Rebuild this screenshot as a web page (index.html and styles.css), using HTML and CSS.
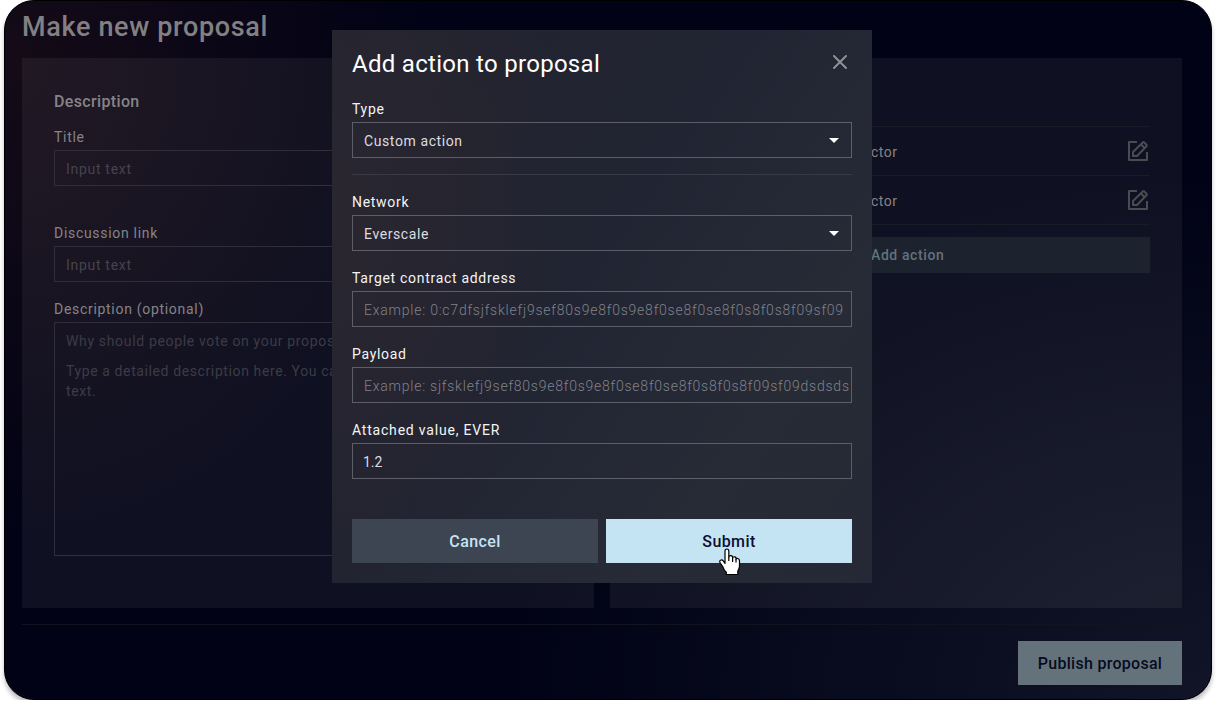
FILE: index.html
```html
<!DOCTYPE html>
<html lang="en">
<head>
<meta charset="utf-8">
<title>Make new proposal</title>
<link rel="stylesheet" href="styles.css">
</head>
<body>
<div class="frame">
  <main class="page">
    <h1 class="page-title">Make new proposal</h1>
    <div class="panels">
      <section class="panel">
        <h2 class="panel-title">Description</h2>
        <div class="label">Title</div>
        <div class="input dim gap-lg">Input text</div>
        <div class="label">Discussion link</div>
        <div class="input dim gap">Input text</div>
        <div class="label">Description (optional)</div>
        <div class="textarea"><p class="why">Why should people vote on your propos</p><p>Type a detailed description here. You ca<br>text.</p></div>
      </section>
      <section class="panel actions">
        <div class="row"><span>ctor</span><svg class="edit" viewBox="0 0 20 20"><path d="M9 1H1v18h18v-8M5 15v-4L15 1.3h1L18.7 4v1L9 15zM13 3.500l3.500 3.500"/></svg></div>
        <div class="row"><span>ctor</span><svg class="edit" viewBox="0 0 20 20"><path d="M9 1H1v18h18v-8M5 15v-4L15 1.3h1L18.7 4v1L9 15zM13 3.500l3.500 3.500"/></svg></div>
        <div class="add"><span>Add action</span></div>
      </section>
    </div>
    <footer class="footer"><div class="publish">Publish proposal</div></footer>
  </main>
  <div class="modal">
    <header class="modal-head">
      <h2 class="modal-title">Add action to proposal</h2>
      <svg class="close" viewBox="0 0 14 14"><path d="M1 1l12 12M13 1L1 13"/></svg>
    </header>
    <div class="label">Type</div>
    <div class="input select"><span>Custom action</span><i class="caret"></i></div>
    <div class="rule"></div>
    <div class="label">Network</div>
    <div class="input select gap"><span>Everscale</span><i class="caret"></i></div>
    <div class="label">Target contract address</div>
    <div class="input ph gap">Example: 0:c7dfsjfsklefj9sef80s9e8f0s9e8f0se8f0se8f0s8f0s8f09sf09</div>
    <div class="label">Payload</div>
    <div class="input ph pay gap">Example: sjfsklefj9sef80s9e8f0s9e8f0se8f0se8f0s8f0s8f09sf09dsdsds</div>
    <div class="label attached">Attached value, EVER</div>
    <div class="input value">1.2</div>
    <div class="buttons">
      <div class="btn cancel">Cancel</div>
      <div class="btn submit">Submit
        <svg class="pointer" viewBox="0 0 22 28"><path d="M6 3.2Q6 1 7.900 1T9.800 3.200V9Q10.500 7.200 12.200 7.700T13.600 10Q14.300 8.300 15.900 8.900T17 11.200Q17.700 10 19 10.500Q20.500 11 20.500 13V18Q20.500 20.500 18.800 23V26.500H7.300V24.200Q5 22.500 3.700 18.500L1 14.500Q.2 12.500 2 12T5 14L6 15.500z"/><path d="M9.800 9v4M13.600 9.500V14M17 11v3.500" fill="none"/></svg>
      </div>
    </div>
  </div>
</div>
</body>
</html>
```
FILE: styles.css
```css
* { box-sizing: border-box; }
body { margin: 0; background: #fff; font: 14px/20px Roboto, "Liberation Sans", sans-serif; letter-spacing: .7px; overflow: hidden; }
h1, h2, p { margin: 0; }

.frame {
  position: relative; width: 1208px; height: 700px; margin-left: 4px;
  border: 1px solid #000; border-radius: 30px;
  background:
    radial-gradient(ellipse 420px 480px at 0 8%, #150b18 0, #150b1800 100%),
    radial-gradient(ellipse 700px 520px at 100% 100%, #111527 0, #11152700 100%),
    #010215;
  box-shadow: 0 4px 4px rgba(0,0,0,.25);
}
.page { padding: 8px 29px 0 17px; color: #858487; }
.page-title { height: 49px; font-size: 27px; line-height: 37px; font-weight: 500; letter-spacing: .65px; color: #828082; }
.panels { display: grid; grid-template-columns: 1fr 1fr; gap: 16px; height: 550px; }
.panel { padding: 32px; background: rgba(255,251,240,.058); }
.panel-title { font-size: 16px; line-height: 23px; height: 36px; font-weight: 500; letter-spacing: .35px; }
.label { height: 24px; line-height: 22px; }
.input {
  display: flex; align-items: center; height: 36px; padding: 1px 11px 0;
  border: 1px solid #5d5e68; overflow: hidden; white-space: nowrap; font-weight: 300;
}
.input.dim { border-color: #302f39; color: #45444c; font-weight: 400; }
.gap-lg { margin-bottom: 36px; }
.gap { margin-bottom: 16px; }
.textarea { height: 234px; border: 1px solid #302f39; padding: 8px 0 0 11px; color: #3c3c46; letter-spacing: .61px; white-space: nowrap; overflow: hidden; }
.textarea .why { letter-spacing: .66px; }
.textarea p + p { margin-top: 10px; }

.actions { padding-top: 68px; }
.row { display: flex; align-items: center; justify-content: space-between; height: 49px; padding: 0 2px 0 229px; border-top: 1px solid #191b27; letter-spacing: .5px; }
.row span { padding-top: 1px; }
.edit { width: 20px; height: 20px; fill: none; stroke: #4b4c52; stroke-width: 2; stroke-linejoin: round; }
.add { height: 49px; border-top: 1px solid #191b27; padding-top: 12px; font-weight: 500; color: #62737b; letter-spacing: .6px; }
.add span { display: block; height: 36px; line-height: 37px; padding-left: 229px; background: #1d222f; }
.footer { display: flex; justify-content: flex-end; margin-top: 16px; padding-top: 16px; border-top: 1px solid #11131f; }
.publish { width: 164px; height: 44px; line-height: 46px; text-align: center; background: #64737b; color: #080b20; font-size: 16px; font-weight: 500; letter-spacing: .28px; }

.modal {
  position: absolute; left: 327px; top: 29px; width: 540px; height: 553px; padding: 20px; color: #f4f4f5;
  background:
    radial-gradient(ellipse 240px 400px at 0 35%, #29262f 0, #29262f00 100%),
    linear-gradient(125deg, #23232f 0, #212432 45%, #272b36 75%, #252935 100%);
}
.modal-head { display: flex; justify-content: space-between; height: 48px; padding-right: 5px; }
.modal-title { font-size: 24px; line-height: 28px; font-weight: 400; letter-spacing: .29px; color: #fff; }
.close { width: 14px; height: 14px; margin-top: 5px; fill: none; stroke: #929399; stroke-width: 1.9; stroke-linecap: round; }
.select { justify-content: space-between; padding-right: 12px; font-weight: 400; letter-spacing: .6px; color: #dcdce0; }
.caret { border: 5px solid transparent; border-top-color: #fff; border-bottom: 0; }
.rule { height: 1px; margin: 16px 0; background: #383b46; }
.ph { color: #80828b; letter-spacing: .77px; }
.pay { padding-right: 0; letter-spacing: .76px; }
.attached { letter-spacing: .8px; }
.value { padding-left: 10px; font-weight: 400; letter-spacing: 0; color: #dcdce0; }
.buttons { display: flex; gap: 8px; margin-top: 40px; font-size: 16px; font-weight: 500; letter-spacing: .4px; text-align: center; line-height: 46px; }
.btn { flex: 1; height: 44px; position: relative; }
.cancel { background: #3e4552; color: #c5e4f3; }
.submit { background: #c5e4f3; color: #0b0f34; }
.pointer { position: absolute; left: 113px; top: 29px; width: 22px; height: 28px; fill: #fff; stroke: #000; stroke-width: 1.2; stroke-linejoin: round; }
```
